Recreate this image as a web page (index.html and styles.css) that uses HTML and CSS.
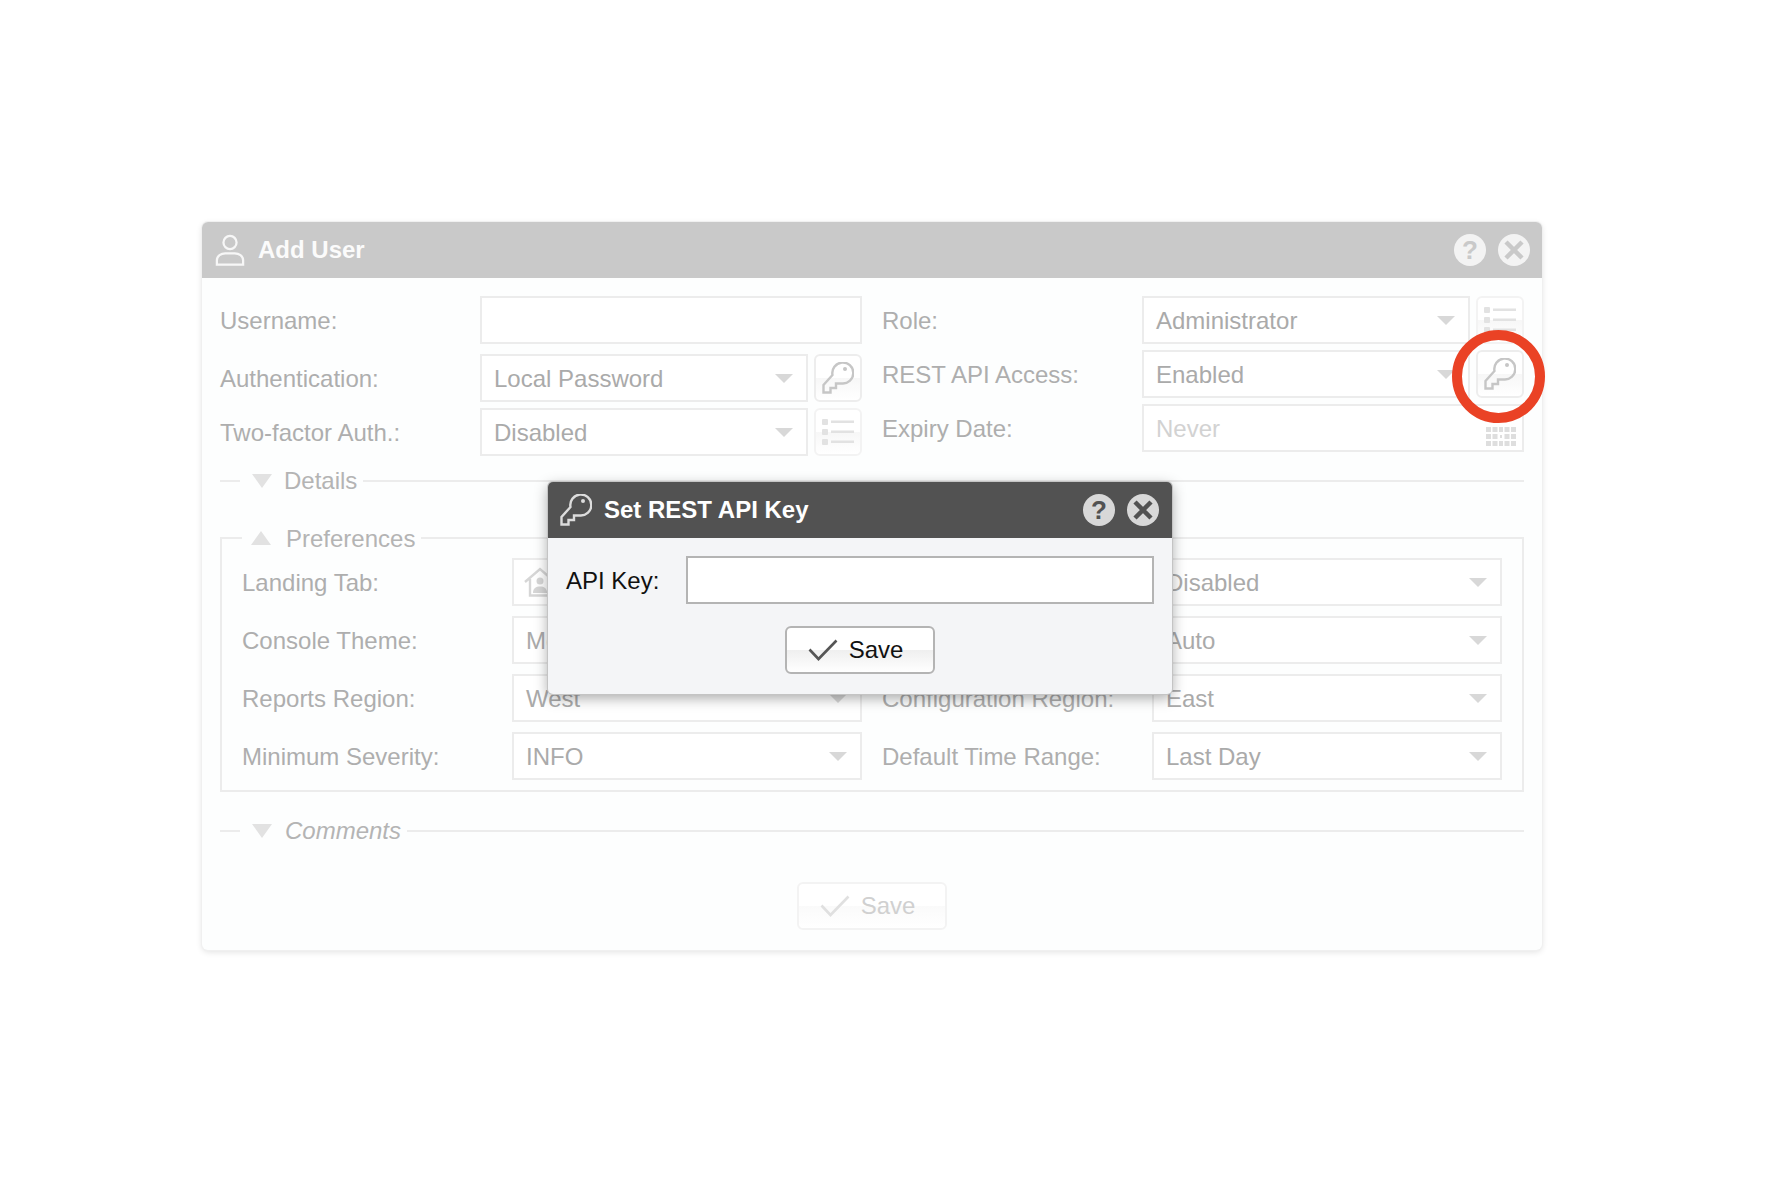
FILE: index.html
```html
<!DOCTYPE html>
<html lang="en">
<head>
<meta charset="utf-8">
<title>Add User</title>
<link rel="stylesheet" href="styles.css">
</head>
<body>
<svg class="defs" width="0" height="0" aria-hidden="true">
  <symbol id="key" viewBox="0 0 32 32">
    <path d="M10.500 13A10.500 10.500 0 1 1 20 21.500H14V26H8.500V30.500H1.500V23Z" fill="none" stroke="currentColor" stroke-width="2.400" stroke-linejoin="miter"/>
    <circle cx="23" cy="7" r="2" fill="currentColor"/>
  </symbol>
  <symbol id="list" viewBox="0 0 32 28">
    <rect x="0" y="1" width="6" height="6" rx="1" fill="currentColor"/>
    <rect x="0" y="11" width="6" height="6" rx="1" fill="currentColor"/>
    <rect x="0" y="21" width="6" height="6" rx="1" fill="currentColor"/>
    <rect x="9" y="2.500" width="23" height="2.500" fill="currentColor"/>
    <rect x="9" y="12.500" width="23" height="2.500" fill="currentColor"/>
    <rect x="9" y="22.500" width="23" height="2.500" fill="currentColor"/>
  </symbol>
  <symbol id="check" viewBox="0 0 30 22">
    <path d="M1.500 10.500 10.500 20 28.500 1.500" fill="none" stroke="currentColor" stroke-width="2.600"/>
  </symbol>
  <symbol id="cross" viewBox="0 0 32 32">
    <path d="M8 8 24 24M24 8 8 24" fill="none" stroke="currentColor" stroke-width="4.500"/>
  </symbol>
</svg>

<main class="window">
  <header class="titlebar">
    <svg class="user-icon" viewBox="0 0 32 34" aria-hidden="true">
      <circle cx="16" cy="9" r="7" fill="none" stroke="currentColor" stroke-width="2.400"/>
      <path d="M2 32.500V28C2 23 6.500 20.500 11 20.500H21C25.500 20.500 30 23 30 28V32.500Z" fill="none" stroke="currentColor" stroke-width="2.400"/>
    </svg>
    <h1 class="title">Add User</h1>
    <span class="round round-light">?</span>
    <span class="round round-light"><svg class="cross"><use href="#cross"/></svg></span>
  </header>

  <div class="content">
    <div class="columns">
      <div class="col col-left">
        <div class="row">
          <label class="label">Username:</label>
          <input class="field" type="text">
        </div>
        <div class="row">
          <label class="label">Authentication:</label>
          <div class="select"><span>Local Password</span><i class="caret"></i></div>
          <button class="tool" type="button"><svg class="tool-key"><use href="#key"/></svg></button>
        </div>
        <div class="row">
          <label class="label">Two-factor Auth.:</label>
          <div class="select"><span>Disabled</span><i class="caret"></i></div>
          <button class="tool tool-dim" type="button"><svg class="tool-list"><use href="#list"/></svg></button>
        </div>
      </div>
      <div class="col col-right">
        <div class="row">
          <label class="label">Role:</label>
          <div class="select"><span>Administrator</span><i class="caret"></i></div>
          <button class="tool tool-dim" type="button"><svg class="tool-list"><use href="#list"/></svg></button>
        </div>
        <div class="row">
          <label class="label">REST API Access:</label>
          <div class="select"><span>Enabled</span><i class="caret"></i></div>
          <button class="tool" type="button"><svg class="tool-key"><use href="#key"/></svg></button>
        </div>
        <div class="row">
          <label class="label">Expiry Date:</label>
          <div class="select date"><span class="placeholder">Never</span>
            <svg class="calendar" viewBox="0 0 30 20" aria-hidden="true">
              <g fill="currentColor">
                <rect x="0" y="0" width="5" height="5"/><rect x="6.500" y="0" width="5" height="5"/><rect x="13" y="0" width="4" height="5"/><rect x="18.500" y="0" width="5" height="5"/><rect x="25" y="0" width="5" height="5"/>
                <rect x="0" y="7" width="5" height="5"/><rect x="6.500" y="7" width="5" height="5"/><rect x="14" y="8" width="2" height="3"/><rect x="18.500" y="7" width="5" height="5"/><rect x="25" y="7" width="5" height="5"/>
                <rect x="0" y="14" width="5" height="5"/><rect x="6.500" y="14" width="5" height="5"/><rect x="13" y="14" width="4" height="5"/><rect x="18.500" y="14" width="5" height="5"/><rect x="25" y="14" width="5" height="5"/>
              </g>
            </svg>
          </div>
        </div>
      </div>
    </div>

    <fieldset class="section section-details">
      <legend class="legend"><i class="tri tri-down"></i><span>Details</span></legend>
    </fieldset>

    <fieldset class="section section-prefs">
      <legend class="legend"><i class="tri tri-up"></i><span>Preferences</span></legend>
      <div class="pref-grid">
        <div class="row">
          <label class="label">Landing Tab:</label>
          <div class="select">
            <svg class="home" viewBox="0 0 32 30" aria-hidden="true">
              <path d="M1 15 16 2 31 15M6 12V28.500H26V12" fill="none" stroke="currentColor" stroke-width="2.400"/>
              <circle cx="16" cy="14" r="3.500" fill="currentColor"/>
              <path d="M9 26C9 21 12 19.500 16 19.500S23 21 23 26Z" fill="currentColor"/>
            </svg>
            <i class="caret"></i>
          </div>
        </div>
        <div class="row">
          <label class="label"></label>
          <div class="select"><span>Disabled</span><i class="caret"></i></div>
        </div>
        <div class="row">
          <label class="label">Console Theme:</label>
          <div class="select"><span>Modern</span><i class="caret"></i></div>
        </div>
        <div class="row">
          <label class="label"></label>
          <div class="select"><span>Auto</span><i class="caret"></i></div>
        </div>
        <div class="row">
          <label class="label">Reports Region:</label>
          <div class="select"><span>West</span><i class="caret"></i></div>
        </div>
        <div class="row">
          <label class="label">Configuration Region:</label>
          <div class="select"><span>East</span><i class="caret"></i></div>
        </div>
        <div class="row">
          <label class="label">Minimum Severity:</label>
          <div class="select"><span>INFO</span><i class="caret"></i></div>
        </div>
        <div class="row">
          <label class="label">Default Time Range:</label>
          <div class="select"><span>Last Day</span><i class="caret"></i></div>
        </div>
      </div>
    </fieldset>

    <fieldset class="section section-comments">
      <legend class="legend legend-italic"><i class="tri tri-down"></i><span>Comments</span></legend>
    </fieldset>

    <div class="actions">
      <button class="save save-dim" type="button"><svg class="check"><use href="#check"/></svg><span>Save</span></button>
    </div>
  </div>

  <div class="callout" aria-hidden="true"></div>

  <section class="modal">
    <header class="modal-bar">
      <svg class="modal-key"><use href="#key"/></svg>
      <h2 class="modal-title">Set REST API Key</h2>
      <span class="round round-dark">?</span>
      <span class="round round-dark"><svg class="cross"><use href="#cross"/></svg></span>
    </header>
    <div class="modal-body">
      <div class="modal-row">
        <label class="modal-label">API Key:</label>
        <input class="modal-field" type="text">
      </div>
      <button class="save" type="button"><svg class="check"><use href="#check"/></svg><span>Save</span></button>
    </div>
  </section>
</main>
</body>
</html>
```
FILE: styles.css
```css
* { box-sizing: border-box; }
html, body { margin: 0; height: 100%; }
body {
  background: #fff;
  font-family: "Liberation Sans", Arial, sans-serif;
  font-size: 24px;
  padding: 222px 224px 0 202px;
  overflow: hidden;
}
.defs { position: absolute; }
.window {
  position: relative;
  width: 1340px;
  height: 728px;
  background: #fdfefe;
  border-radius: 6px;
  box-shadow: 0 0 0 1px #f0f0f0, 0 2px 6px rgba(0, 0, 0, .12);
}
.titlebar {
  height: 56px;
  display: flex;
  align-items: center;
  padding: 0 12px 0 13px;
  background: #c9c9c9;
  color: #f7f7f7;
  border-radius: 6px 6px 0 0;
}
.user-icon { width: 30px; height: 32px; margin-right: 13px; }
.title { flex: 1; margin: 0; font-size: 24px; font-weight: 700; color: #fbfbfb; }
.round {
  width: 32px;
  height: 32px;
  border-radius: 50%;
  display: flex;
  align-items: center;
  justify-content: center;
  font-weight: 700;
  font-size: 26px;
  line-height: 1;
}
.round + .round { margin-left: 12px; }
.round-light { background: #f3f3f3; color: #c9c9c9; }
.round-dark { background: #d8d8d8; color: #525252; }
.cross { width: 32px; height: 32px; }

.content { padding: 18px 18px 20px; }
.columns { display: flex; gap: 20px; }
.col { flex: 1; display: flex; flex-direction: column; gap: 6px; }
.col-left .row:first-child { margin-bottom: 4px; }
.row { display: flex; align-items: center; height: 48px; min-width: 0; }
.label { flex: 0 0 260px; padding-top: 2px; color: #aeaeae; white-space: nowrap; }
.field, .select {
  height: 48px;
  border: 2px solid #ececec;
  background: #fff;
  font: inherit;
}
.field { flex: 1; min-width: 0; }
.select {
  flex: 1;
  min-width: 0;
  display: flex;
  align-items: center;
  justify-content: space-between;
  padding: 0 13px 0 12px;
  color: #aaa;
}
.select span { padding-top: 2px; }
.placeholder { color: #d2d2d2; }
.caret {
  width: 0;
  height: 0;
  border-left: 9px solid transparent;
  border-right: 9px solid transparent;
  border-top: 9px solid #d8d8d8;
}
.tool {
  flex: 0 0 48px;
  width: 48px;
  height: 48px;
  margin-left: 6px;
  padding: 0;
  display: flex;
  align-items: center;
  justify-content: center;
  background: linear-gradient(#fff 50%, #f7f7f7 50%, #fff);
  border: 2px solid #ededed;
  border-radius: 6px;
  color: #c6c6c6;
}
.tool-dim { border-color: #f3f3f3; color: #e2e2e2; }
.tool-key { width: 32px; height: 32px; }
.tool-list { width: 32px; height: 28px; }
.date { padding-right: 6px; }
.calendar { width: 30px; height: 20px; margin-top: 18px; color: #dedede; }
.home { width: 32px; height: 30px; margin-left: -2px; color: #d6d6d6; }

.section { margin: 0; padding: 0; min-width: 0; border: 0 solid #ececec; }
.legend {
  display: flex;
  align-items: center;
  height: 30px;
  margin-left: 20px;
  padding: 0 6px 0 12px;
  color: #b4b4b4;
}
.legend-italic { font-style: italic; }
.tri { width: 0; height: 0; margin-right: 12px; border-left: 10.500px solid transparent; border-right: 10.500px solid transparent; }
.tri-down { border-top: 14px solid #e2e2e2; }
.tri-up { border-bottom: 14px solid #e2e2e2; margin-right: 15px; }
.legend-italic .tri { margin-right: 13px; }
.section-details { border-top-width: 2px; margin-top: 10px; }
.section-prefs {
  border-width: 2px;
  margin-top: 27px;
  padding: 5px 20px 10px;
}
.section-prefs .legend { margin-left: 0; padding-left: 9px; }
.section-prefs .legend span { padding-top: 2px; }
.section-comments { border-top-width: 2px; margin-top: 24px; }
.pref-grid { display: grid; grid-template-columns: 1fr 1fr; gap: 10px 20px; }
.pref-grid .label { flex-basis: 270px; }
.actions { display: flex; justify-content: center; margin-top: 36px; }

.save {
  width: 150px;
  height: 48px;
  display: flex;
  align-items: center;
  justify-content: center;
  gap: 11px;
  padding: 0 9px 0 0;
  font: inherit;
  color: #111;
  background: linear-gradient(#fff 50%, #efefef 50%, #fff);
  border: 2px solid #b4b4b4;
  border-radius: 6px;
}
.save .check { width: 30px; height: 22px; color: #555; }
.save-dim { color: #d0d0d0; background: linear-gradient(#fff 50%, #fafafa 50%, #fff); border-color: #f3f3f3; }
.save-dim .check { color: #e0e0e0; }

.callout {
  position: absolute;
  left: 1250px;
  top: 108px;
  width: 93px;
  height: 93px;
  border: 10px solid #ea4225;
  border-radius: 50%;
}

.modal {
  position: absolute;
  left: 346px;
  top: 260px;
  width: 624px;
  height: 212px;
  background: #f4f5f7;
  border-radius: 5px;
  box-shadow: 0 0 0 1px #c4c4c4, 0 4px 14px rgba(0, 0, 0, .35);
}
.modal-bar {
  height: 56px;
  display: flex;
  align-items: center;
  padding: 0 13px 0 12px;
  background: #525252;
  border-radius: 5px 5px 0 0;
  color: #dcdcdc;
}
.modal-key { width: 32px; height: 32px; margin-right: 12px; }
.modal-title { flex: 1; margin: 0; font-size: 24px; font-weight: 700; color: #fff; }
.modal-body {
  display: flex;
  flex-direction: column;
  align-items: center;
  gap: 22px;
  padding: 18px 18px 0;
}
.modal-row { display: flex; align-items: center; width: 100%; }
.modal-label { flex: 0 0 120px; padding-top: 2px; color: #111; white-space: nowrap; }
.modal-field { flex: 1; min-width: 0; height: 48px; border: 2px solid #b4b4b4; background: #fff; font: inherit; }
```
